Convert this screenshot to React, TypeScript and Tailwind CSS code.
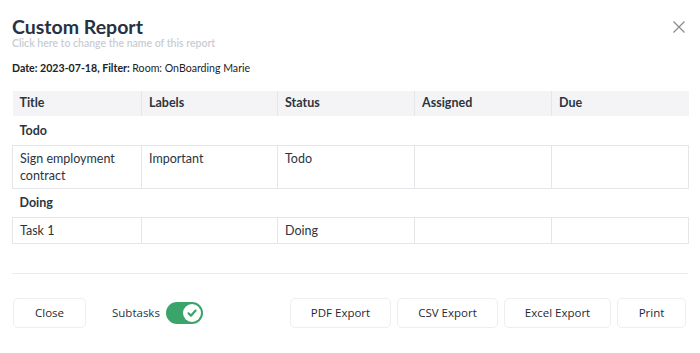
import { useState } from 'react'

const columns = [
  { name: 'Title', width: 'w-[129px]' },
  { name: 'Labels', width: 'w-[136px]' },
  { name: 'Status', width: 'w-[137px]' },
  { name: 'Assigned', width: 'w-[137px]' },
  { name: 'Due', width: 'w-[137px]' },
]

const groups = [
  { name: 'Todo', rows: [{ title: 'Sign employment contract', labels: 'Important', status: 'Todo' }] },
  { name: 'Doing', rows: [{ title: 'Task 1', labels: '', status: 'Doing' }] },
]

function ExportButton({ label, className }: { label: string; className: string }) {
  return (
    <button
      className={`h-[30px] rounded-[5px] border border-[#eeeef2] bg-white text-[11.5px] text-[#1f2933] font-['Open_Sans',sans-serif] ${className}`}
    >
      {label}
    </button>
  )
}

export default function App() {
  const [subtasks, setSubtasks] = useState(true)

  return (
    <div className="relative h-[353px] w-[700px] overflow-hidden bg-white font-['Lato','Noto_Sans',sans-serif] text-[#2b3440]">
      <button className="absolute right-[15px] top-[21px] text-[#8a8a8a]" title="Close">
        <svg className="h-[12px] w-[12px]" viewBox="0 0 12 12" fill="none" stroke="currentColor" strokeWidth="1.2">
          <path d="M0.5 0.5l11 11M11.5 0.5l-11 11" />
        </svg>
      </button>

      <div className="px-3 pt-[16px]">
        <h1 className="text-[19.5px] font-bold leading-[21px] text-[#263241]">Custom Report</h1>
        <p className="text-[10.5px] font-semibold leading-[12px] text-[#c9cdd2]">Click here to change the name of this report</p>
        <p className="mt-[12px] text-[10.6px] leading-[14px] text-[#222]">
          <span className="font-bold">Date: 2023-07-18, Filter: </span>Room: OnBoarding Marie
        </p>

        <table className="mt-[16px] w-full table-fixed border-collapse text-[12.5px]">
          <thead>
            <tr className="bg-[#f4f4f6]">
              {columns.map((c) => (
                <th key={c.name} className={`h-[25px] border-l border-[#e6e6ea] px-[7px] text-left font-bold text-[#2b3440] first:border-l-0 ${c.width}`}>
                  {c.name}
                </th>
              ))}
            </tr>
          </thead>
          <tbody>
            {groups.map((g) => (
              <GroupRows key={g.name} group={g} />
            ))}
          </tbody>
        </table>

        <div className="mt-[29px] h-px bg-[#e9e9f0]" />

        <div className="mt-[24px] flex items-center">
          <ExportButton label="Close" className="ml-px w-[73px]" />
          <span className="ml-[26px] text-[11.5px] text-[#2b3440] font-['Open_Sans',sans-serif]">Subtasks</span>
          <button
            onClick={() => setSubtasks(!subtasks)}
            className={`ml-[6px] flex h-[22px] w-[37px] items-center rounded-full px-[2px] ${subtasks ? 'justify-end bg-[#3ba46b]' : 'justify-start bg-[#cfd3d8]'}`}
          >
            <span className="flex h-[18px] w-[18px] items-center justify-center rounded-full bg-white">
              {subtasks && (
                <svg className="h-[12px] w-[12px]" viewBox="0 0 12 12" fill="none" stroke="#3ba46b" strokeWidth="2.2" strokeLinecap="round" strokeLinejoin="round">
                  <path d="M2.5 6.3l2.4 2.4L9.6 3.6" />
                </svg>
              )}
            </span>
          </button>
          <div className="ml-auto mr-[2px] flex gap-[6px]">
            <ExportButton label="PDF Export" className="w-[101px]" />
            <ExportButton label="CSV Export" className="w-[101px]" />
            <ExportButton label="Excel Export" className="w-[107px]" />
            <ExportButton label="Print" className="w-[69px]" />
          </div>
        </div>
      </div>
    </div>
  )
}

function GroupRows({ group }: { group: (typeof groups)[number] }) {
  const cell = 'border border-[#e6e6ea] px-[7px] py-[4px] align-top leading-[17px]'
  return (
    <>
      <tr>
        <td colSpan={5} className="h-[29px] px-[7px] pt-[2px] font-bold text-[#2b3440]">
          {group.name}
        </td>
      </tr>
      {group.rows.map((r) => (
        <tr key={r.title}>
          <td className={cell}>{r.title}</td>
          <td className={cell}>{r.labels}</td>
          <td className={cell}>{r.status}</td>
          <td className={cell}></td>
          <td className={cell}></td>
        </tr>
      ))}
    </>
  )
}
